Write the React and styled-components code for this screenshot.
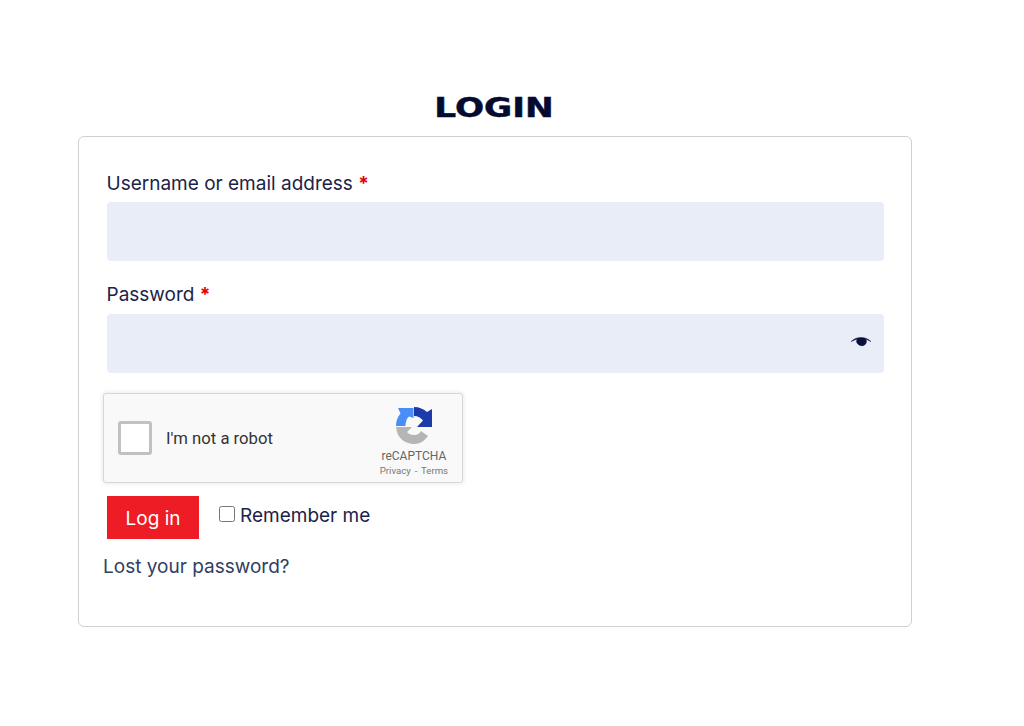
import React from 'react'
import styled, { createGlobalStyle } from 'styled-components'

const Global = createGlobalStyle`
  html, body { margin: 0; padding: 0; background: #fff; }
  body { font-family: Inter, "Liberation Sans", sans-serif; }
`

const App = () => (
  <Page>
    <Global />
    <Column>
      <Heading><span>LOGIN</span></Heading>
      <Card>
        <Field>
          <Label>Username or email address <Req>*</Req></Label>
          <Input type="text" />
        </Field>
        <Field>
          <Label $tight>Password <Req>*</Req></Label>
          <InputWrap>
            <Input type="password" />
            <EyeButton aria-label="Show password">
              <svg width="20" height="10" viewBox="0 0 20 12" preserveAspectRatio="none">
                <path d="M0 5.6C3 1.8 6.4 .6 10 .6s7 1.2 10 5c-2.600-2-4.400-2.800-5.400-3 .6.8.9 1.700.9 2.700 0 2.600-2 5.200-4.500 5.200S5.500 7.900 5.500 5.300c0-1 .3-1.900.9-2.700C5 2.800 2.800 3.700 0 5.600z" fill="#0a0f3c" stroke="#0a0f3c" strokeWidth="0.5" />
              </svg>
            </EyeButton>
          </InputWrap>
        </Field>
        <Captcha>
          <CaptchaBox />
          <CaptchaText>I'm not a robot</CaptchaText>
          <CaptchaBrand>
            <svg width="36" height="37" viewBox="0 0 36 37">
              <path d="M0 20H16L11 25C12.500 27 15 28 18 28C21 28 24 26.500 25 24L32 29C28.500 34 24 37 18 37C10 37 3 32 1 25Z" fill="#b5b5b5" />
              <path d="M0 19C0 14 1.500 10 4.500 6.500L2 1H17.500V11L13 9.500C11 11 9.500 15 9.500 19Z" fill="#4a8df6" />
              <path d="M18 0C23 0 28 2 31 5L36 2V20H21L27 13.500C25 11 22 9 18 9Z" fill="#1c3aa9" />
            </svg>
            <BrandName>reCAPTCHA</BrandName>
            <BrandLinks>Privacy - Terms</BrandLinks>
          </CaptchaBrand>
        </Captcha>
        <ActionRow>
          <SubmitButton type="button">Log in</SubmitButton>
          <Remember>
            <Check type="checkbox" />
            Remember me
          </Remember>
        </ActionRow>
        <LostLink href="#">Lost your password?</LostLink>
      </Card>
    </Column>
  </Page>
)

export default App

const Page = styled.div`
  min-height: 726px;
  padding: 92px 0 0 78px;
  box-sizing: border-box;
`

const Column = styled.div`
  width: 834px;
`

const Heading = styled.h2`
  margin: 0 0 14px;
  height: 30px;
  line-height: 30px;
  text-align: center;
  font-family: "DejaVu Sans", sans-serif;
  font-weight: 700;
  font-size: 27px;
  color: #050a30;
  -webkit-text-stroke: 0.5px #050a30;

  span {
    display: inline-block;
    transform: translate(-1px, 1px) scale(1.27, 1);
  }
`

const Card = styled.div`
  box-sizing: border-box;
  height: 491px;
  border: 1px solid #d0d0d0;
  border-radius: 6px;
  padding: 33px 27px 0 28px;
  background: #fff;
`

const Field = styled.div`
  margin-bottom: 20px;
`

const Label = styled.label`
  display: block;
  font-size: 19px;
  line-height: 28px;
  margin: 0 0 ${p => (p.$tight ? 5 : 4)}px -0.5px;
  color: #1c2348;
`

const Req = styled.span`
  color: #e80000;
  font-weight: 700;
`

const InputWrap = styled.div`
  position: relative;
`

const Input = styled.input`
  display: block;
  box-sizing: border-box;
  width: 100%;
  height: 59px;
  border: 0;
  border-radius: 4px;
  background: #e9edf8;
`

const EyeButton = styled.span`
  position: absolute;
  right: 13px;
  top: 23px;
  line-height: 0;
`

const Captcha = styled.div`
  box-sizing: border-box;
  display: flex;
  align-items: center;
  width: 360px;
  height: 90px;
  margin-left: -4px;
  border: 1px solid #d6d6d6;
  border-radius: 3px;
  background: #f9f9f9;
  box-shadow: 0 0 4px 1px rgba(0, 0, 0, 0.08);
  font-family: Roboto, "Liberation Sans", sans-serif;
`

const CaptchaBox = styled.div`
  box-sizing: border-box;
  width: 34px;
  height: 34px;
  margin-left: 14px;
  border: 3px solid #c1c1c1;
  border-radius: 3px;
  background: #fff;
`

const CaptchaText = styled.span`
  margin-left: 14px;
  font-size: 16.7px;
  color: #333;
`

const CaptchaBrand = styled.div`
  display: flex;
  flex-direction: column;
  align-items: center;
  margin-left: auto;
  margin-right: 14px;
  padding-top: 8px;
  color: #666;
`

const BrandName = styled.span`
  margin-top: 5px;
  font-size: 12px;
  line-height: 14px;
`

const BrandLinks = styled.span`
  margin-top: 2px;
  font-size: 9.6px;
  line-height: 12px;
  word-spacing: 1.5px;
  color: #777;
`

const ActionRow = styled.div`
  display: flex;
  align-items: flex-start;
  gap: 20px;
  margin-top: 13px;
`

const SubmitButton = styled.button`
  width: 92px;
  height: 43px;
  padding: 2px 0 0;
  border: 0;
  background: #ee1c25;
  color: #fff;
  font-family: Inter, sans-serif;
  font-size: 19px;
`

const Remember = styled.label`
  display: flex;
  align-items: center;
  gap: 5px;
  height: 38px;
  font-size: 19px;
  color: #1c2348;
`

const Check = styled.input`
  width: 16px;
  height: 16px;
  margin: 0;
  margin-top: -2px;
`

const LostLink = styled.a`
  display: block;
  margin: 15px 0 0 -4px;
  font-size: 19px;
  line-height: 26px;
  color: #2f4063;
  text-decoration: none;
`
